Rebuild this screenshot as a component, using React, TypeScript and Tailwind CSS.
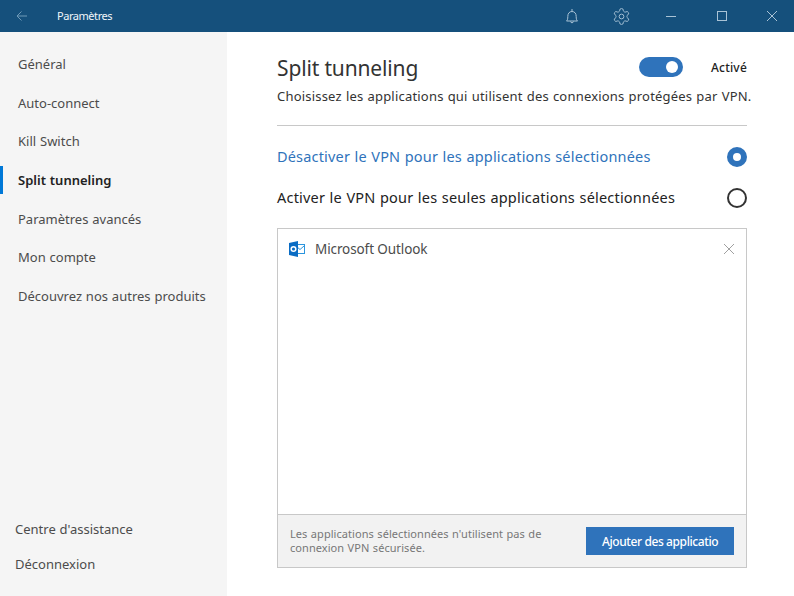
import React from "react";

const navItems = ["Général", "Auto-connect", "Kill Switch", "Split tunneling", "Paramètres avancés", "Mon compte", "Découvrez nos autres produits"];

function Outlook() {
  return (
    <svg width="16" height="16" viewBox="0 0 16 16">
      <rect x="6.500" y="3.500" width="9" height="9" fill="#fff" stroke="#2b95de" strokeWidth="1" />
      <path d="M7 5 L11 8.500 L15 5" fill="none" stroke="#2b95de" strokeWidth="1" />
      <path d="M0 2 L9 0 V16 L0 14 Z" fill="#0a6cc4" />
      <circle cx="4.500" cy="8" r="2.300" fill="none" stroke="#fff" strokeWidth="1.500" />
    </svg>
  );
}

export default function App() {
  return (
    <div className="w-[794px] h-[596px] flex flex-col overflow-hidden bg-white font-['Noto_Sans',sans-serif]">
      <header className="h-8 shrink-0 bg-[#15507c] flex items-center text-white">
        <svg width="12" height="12" viewBox="0 0 12 12" className="ml-[16px] text-[#6f9ab8]" fill="none" stroke="currentColor" strokeWidth="1">
          <path d="M11 6H1M5.500 1.500 1 6l4.500 4.500" />
        </svg>
        <span className="ml-[29px] text-[11px] tracking-[-0.45px] text-[#f0f5f9]">Paramètres</span>
        <div className="ml-auto flex items-center text-[#a9c3d6]">
          <svg width="14" height="17" viewBox="0 0 14 17" fill="none" stroke="currentColor" strokeWidth="1" className="mr-[33px]">
            <path d="M1.500 13c1-1 1.300-2 1.300-4.500 0-3 1.500-5 4.200-5s4.200 2 4.200 5c0 2.500.3 3.500 1.300 4.500ZM5.500 13.500c.2 1.700 2.800 1.700 3 0M7 1v2.500" />
          </svg>
          <svg width="19" height="19" viewBox="0 0 24 24" fill="none" stroke="currentColor" strokeWidth="1.2" className="mr-[35px]">
            <path d="M12.220 2h-.44a2 2 0 0 0-2 2v.180a2 2 0 0 1-1 1.730l-.430.250a2 2 0 0 1-2 0l-.150-.080a2 2 0 0 0-2.730.730l-.220.380a2 2 0 0 0 .730 2.730l.150.100a2 2 0 0 1 1 1.720v.510a2 2 0 0 1-1 1.740l-.150.090a2 2 0 0 0-.730 2.730l.220.380a2 2 0 0 0 2.730.730l.150-.080a2 2 0 0 1 2 0l.430.250a2 2 0 0 1 1 1.730V20a2 2 0 0 0 2 2h.440a2 2 0 0 0 2-2v-.180a2 2 0 0 1 1-1.730l.430-.250a2 2 0 0 1 2 0l.150.080a2 2 0 0 0 2.730-.730l.220-.390a2 2 0 0 0-.730-2.730l-.150-.080a2 2 0 0 1-1-1.740v-.500a2 2 0 0 1 1-1.740l.150-.090a2 2 0 0 0 .730-2.730l-.220-.380a2 2 0 0 0-2.730-.730l-.150.080a2 2 0 0 1-2 0l-.430-.250a2 2 0 0 1-1-1.730V4a2 2 0 0 0-2-2z" />
            <circle cx="12" cy="12" r="3" />
          </svg>
          <div className="w-[10px] h-px bg-[#a9c3d6] mr-[41px]" />
          <div className="w-[10px] h-[10px] border border-[#a9c3d6] mr-[40px]" />
          <svg width="10" height="10" viewBox="0 0 10 10" stroke="currentColor" strokeWidth="1" className="mr-[17px]">
            <path d="M0 0l10 10M10 0 0 10" />
          </svg>
        </div>
      </header>
      <div className="flex-1 flex min-h-0">
        <aside className="w-[227px] shrink-0 bg-[#f5f5f5] flex flex-col text-[13px] tracking-[0px] [word-spacing:0.5px] text-[#4c4c4c]">
          <nav className="pt-[13.3px] flex flex-col">
            {navItems.map((item) => {
              const active = item === "Split tunneling";
              return (
                <div key={item} className={"relative h-[38.7px] flex items-center pl-[18px] " + (active ? "font-semibold text-[#222222]" : "")}>
                  {active && <span className="absolute left-0 top-[5px] w-[3px] h-[28px] bg-[#0078d7]" />}
                  {item}
                </div>
              );
            })}
          </nav>
          <div className="mt-auto pb-[21px] pl-[15px] flex flex-col gap-[15px]">
            <div className="h-5 flex items-center">Centre d'assistance</div>
            <div className="h-5 flex items-center">Déconnexion</div>
          </div>
        </aside>
        <main className="flex-1 min-w-0 pl-[50px] pr-[47px] flex flex-col">
          <div className="flex items-center h-[35px] mt-[19px]">
            <h1 className="text-[21px] leading-none tracking-[-0.15px] text-[#333333]">Split tunneling</h1>
            <div className="ml-auto w-[44px] h-[20px] -mt-[3px] rounded-full bg-[#2f73bb] relative">
              <span className="absolute right-[5px] top-[4px] w-3 h-3 rounded-full bg-white" />
            </div>
            <span className="ml-[28px] text-[12px] -mt-[1px] font-medium tracking-[0.2px] text-[#222222]">Activé</span>
          </div>
          <p className="text-[13px] leading-[18px] mt-px tracking-[0.2px] [word-spacing:0.5px] whitespace-nowrap text-[#333333]">Choisissez les applications qui utilisent des connexions protégées par VPN.</p>
          <div className="h-px bg-[#c8c8c8] mt-[20px]" />
          <div className="flex items-center justify-between mt-[21px] h-[20px] text-[14.5px] tracking-[0.18px] [word-spacing:0.5px] text-[#2f73bb]">
            <span>Désactiver le VPN pour les applications sélectionnées</span>
            <span className="w-5 h-5 rounded-full border-[6px] border-[#2f73bb] bg-white" />
          </div>
          <div className="flex items-center justify-between mt-[21px] h-[20px] text-[14.5px] tracking-[0.2px] [word-spacing:0.5px] text-[#222222]">
            <span>Activer le VPN pour les seules applications sélectionnées</span>
            <span className="w-5 h-5 rounded-full border-2 border-[#333333] bg-white" />
          </div>
          <section className="mt-[20px] h-[340px] border border-[#c8c8c8] flex flex-col">
            <div className="flex-1 flex items-start pt-[12px] pl-[11px] pr-[12px]">
              <Outlook />
              <span className="ml-[10px] text-[13.5px] leading-4 tracking-[-0.1px] text-[#4c4c4c]">Microsoft Outlook</span>
              <svg width="10" height="10" viewBox="0 0 10 10" stroke="#a0a0a0" strokeWidth="1" className="ml-auto mt-[3px]">
                <path d="M0 0l10 10M10 0 0 10" />
              </svg>
            </div>
            <div className="h-[53px] shrink-0 bg-[#f2f2f2] border-t border-[#c8c8c8] flex items-center pl-[12px] pr-[12px]">
              <p className="w-[280px] text-[11px] leading-[14px] tracking-[0.06px] [word-spacing:0.5px] text-[#777777]">Les applications sélectionnées n'utilisent pas de connexion VPN sécurisée.</p>
              <div className="ml-auto w-[148px] h-[28px] bg-[#2f73bb] text-white text-[12px] font-medium leading-none tracking-[-0.4px] flex items-center pl-[16px] pt-px overflow-hidden whitespace-nowrap">Ajouter des applicatio</div>
            </div>
          </section>
        </main>
      </div>
    </div>
  );
}
